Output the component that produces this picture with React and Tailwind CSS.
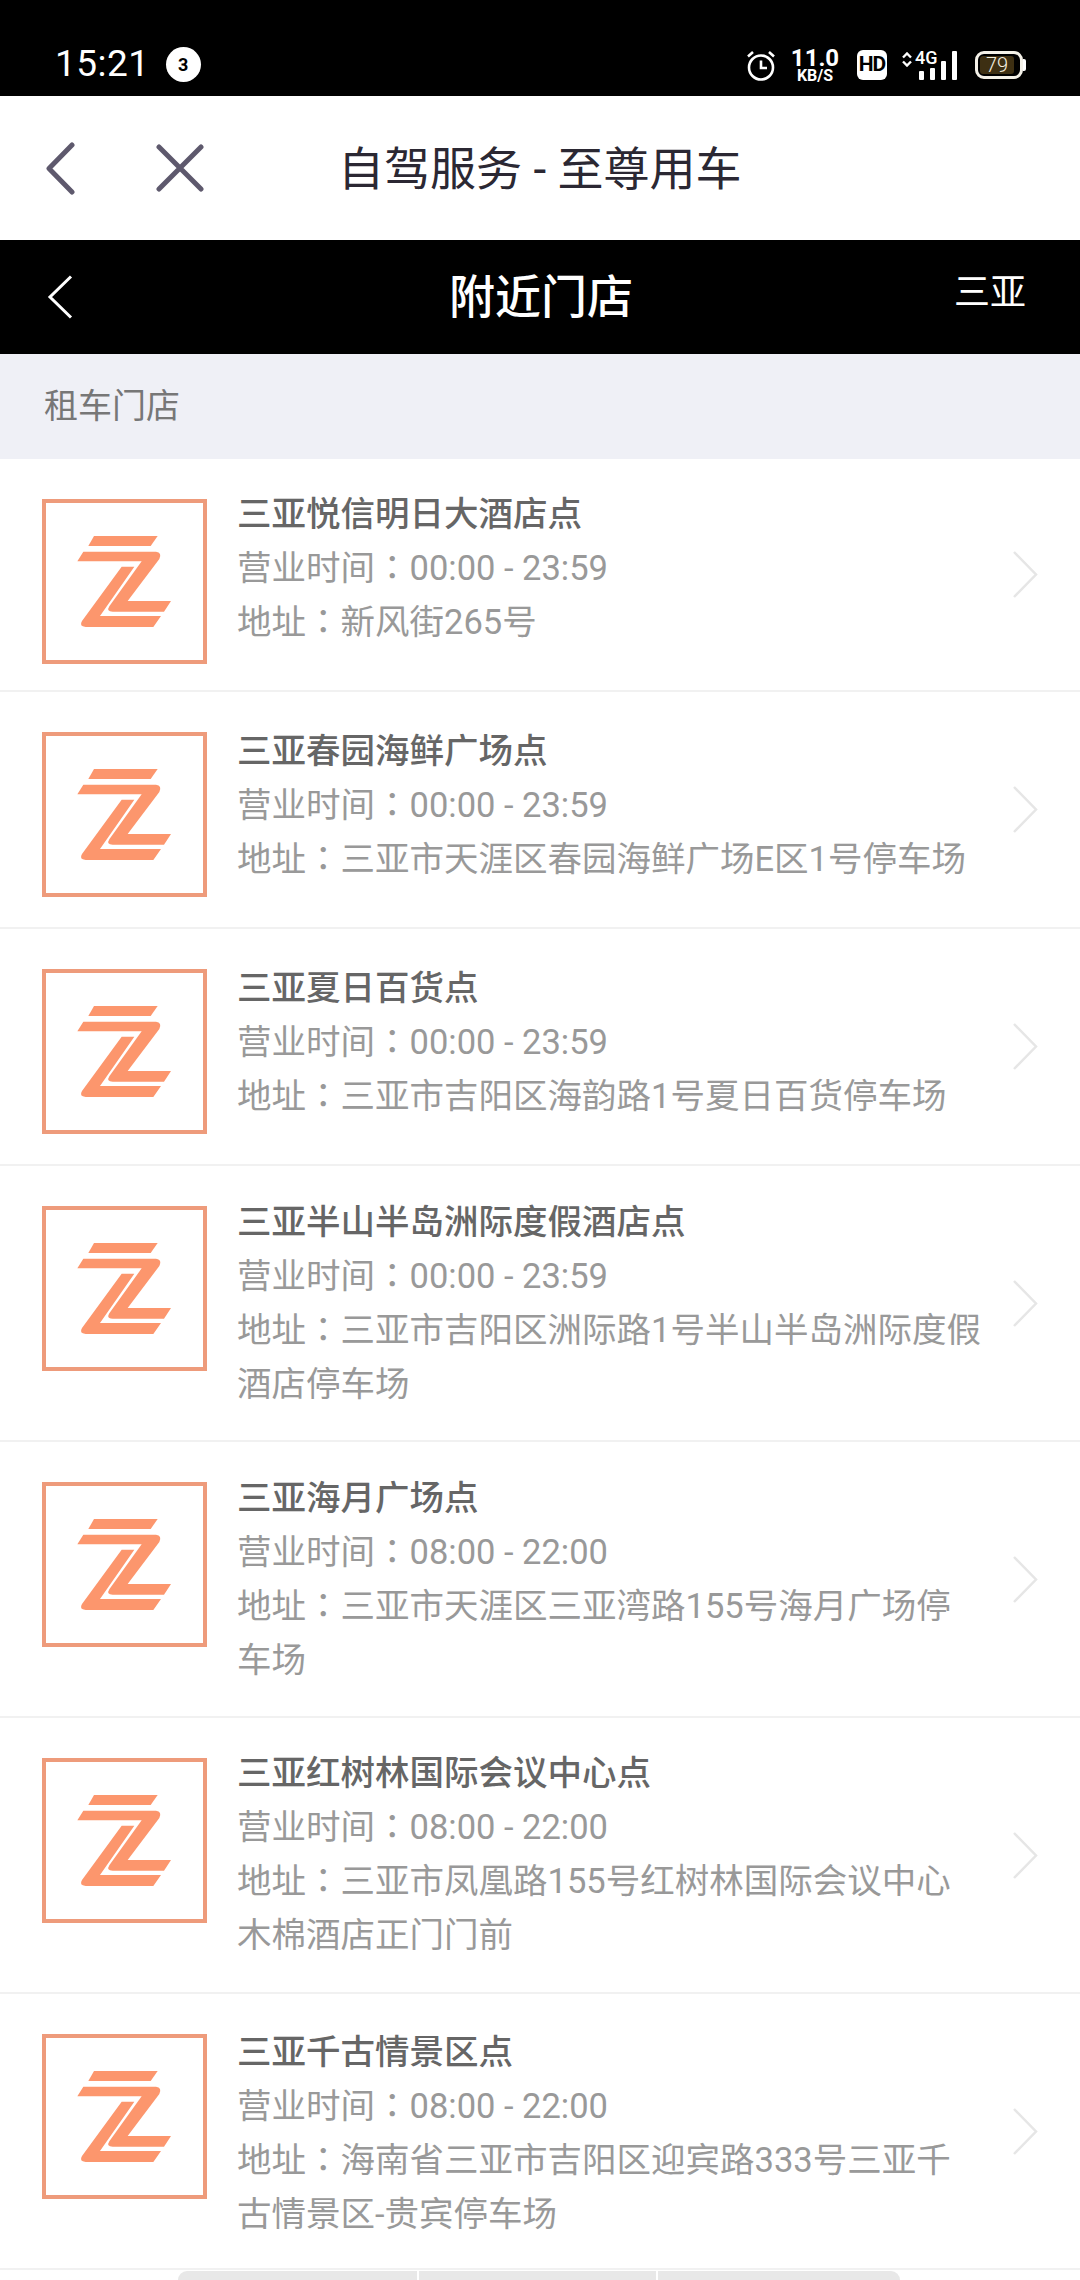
const stores = [
  { name: '三亚悦信明日大酒店点', hours: '00:00 - 23:59', address: '新风街265号', row: 'h-[233px]', text: 'mt-[28px]' },
  { name: '三亚春园海鲜广场点', hours: '00:00 - 23:59', address: '三亚市天涯区春园海鲜广场E区1号停车场', row: 'h-[237px]', text: 'mt-[32px]' },
  { name: '三亚夏日百货点', hours: '00:00 - 23:59', address: '三亚市吉阳区海韵路1号夏日百货停车场', row: 'h-[237px]', text: 'mt-[32px]' },
  { name: '三亚半山半岛洲际度假酒店点', hours: '00:00 - 23:59', address: '三亚市吉阳区洲际路1号半山半岛洲际度假酒店停车场', row: 'h-[276px]', text: 'mt-[29px]' },
  { name: '三亚海月广场点', hours: '08:00 - 22:00', address: '三亚市天涯区三亚湾路155号海月广场停车场', row: 'h-[276px]', text: 'mt-[29px]' },
  { name: '三亚红树林国际会议中心点', hours: '08:00 - 22:00', address: '三亚市凤凰路155号红树林国际会议中心木棉酒店正门门前', row: 'h-[276px]', text: 'mt-[28px]' },
  { name: '三亚千古情景区点', hours: '08:00 - 22:00', address: '海南省三亚市吉阳区迎宾路333号三亚千古情景区-贵宾停车场', row: 'h-[276px]', text: 'mt-[31px]' },
]

function Colon() {
  return <span className="font-['Roboto','Noto_Sans_CJK_TC',sans-serif]">：</span>
}

function StoreLogo() {
  return (
    <div className="w-[165px] h-[165px] mt-[40px] shrink-0 border-[4px] border-[#ee9b7b] bg-white">
      <svg viewBox="78 66 471 471" className="w-full h-full" fill="#fc966d">
        <path d="M222 165H413L392 195H205Z" />
        <path d="M190 212H408Q427 214 418 234L323 360H453L432 392H278Q258 392 268 376L365 241H172Z" />
        <path d="M305 257H343L240 405H423L400 438H197Q176 436 186 420Z" />
      </svg>
    </div>
  )
}

function StoreRow({ store }) {
  return (
    <div className={`flex border-b-2 border-[#f1f1f1] pl-[42px] ${store.row}`}>
      <StoreLogo />
      <div className={`w-[745px] ml-[30px] shrink-0 text-[34.5px] leading-[54px] text-[#999999] ${store.text}`}>
        <div className="font-medium text-[#666666]">{store.name}</div>
        <div>营业时间<Colon />{store.hours}</div>
        <div>地址<Colon />{store.address}</div>
      </div>
      <svg viewBox="0 0 25 47" className="w-[25px] h-[47px] self-center shrink-0 ml-[31px]" fill="none" stroke="#e6e6e6" strokeWidth="2.5">
        <path d="M1 1L23 23.5L1 46" />
      </svg>
    </div>
  )
}

function StatusBar() {
  return (
    <div className="h-[96px] bg-black text-white flex items-end pb-[12px] pl-[55px] pr-[54px] font-['Roboto']">
      <span className="text-[37px] leading-[40px] tracking-[0.5px]">15:21</span>
      <span className="ml-[16px] mb-[2px] w-[35px] h-[35px] rounded-full bg-white text-black flex items-center justify-center text-[18px] font-bold">3</span>
      <div className="ml-auto flex items-center h-[36px] mb-[1px]">
        <svg viewBox="0 0 28 31" className="w-[28px] h-[31px]" fill="none" stroke="white" strokeWidth="2.6">
          <circle cx="14" cy="17.5" r="12" />
          <path d="M14 10.5V18H20M1 6.5L6 2M27 6.5L22 2" />
        </svg>
        <div className="ml-[16px] w-[48px] flex flex-col items-center font-bold">
          <span className="text-[24px] leading-[20px]">11.0</span>
          <span className="text-[16px] leading-[15px]">KB/S</span>
        </div>
        <span className="ml-[18px] w-[30px] h-[30px] rounded-[6px] bg-white text-black flex items-center justify-center text-[21px] font-bold tracking-[-1px]">HD</span>
        <svg viewBox="0 0 10 15" className="ml-[15px] mb-[11px] w-[10px] h-[15px]" fill="none" stroke="white" strokeWidth="2.4">
          <path d="M1 5.5L5 1.5L9 5.5M1 9.5L5 13.5L9 9.5" />
        </svg>
        <div className="relative w-[52px] h-[30px] ml-[2px]">
          <span className="absolute left-[1px] top-[-1px] text-[18px] leading-[18px] font-medium">4G</span>
          <div className="absolute left-[5px] bottom-0 flex items-end gap-[6px]">
            <span className="w-[5px] h-[9px] bg-white rounded-[1px]" />
            <span className="w-[5px] h-[12px] bg-white rounded-[1px]" />
            <span className="w-[5px] h-[19px] bg-white rounded-[1px]" />
            <span className="w-[5px] h-[29px] bg-white rounded-[1px]" />
          </div>
        </div>
        <div className="ml-[9px] flex items-center">
          <div className="w-[48px] h-[28px] rounded-[9px] border-[3px] border-[#f4f1e8] p-[2px] flex">
            <div className="w-[34px] h-full rounded-[3px] bg-[#3d2f12] flex items-center justify-center text-[20px] font-light leading-none text-[#f5f0e0]">79</div>
          </div>
          <span className="w-[3px] h-[12px] bg-white rounded-r-[2px]" />
        </div>
      </div>
    </div>
  )
}

export default function App() {
  return (
    <div className="w-[1080px] h-[2280px] overflow-hidden bg-white font-['Roboto','Noto_Sans_CJK_SC',sans-serif]">
      <StatusBar />

      <div className="h-[144px] flex items-center relative">
        <svg viewBox="0 0 30 53" className="ml-[45px] w-[30px] h-[53px]" fill="none" stroke="#5e596d" strokeWidth="5" strokeLinecap="round" strokeLinejoin="round">
          <path d="M27 3L4 26.5L27 50" />
        </svg>
        <svg viewBox="0 0 48 48" className="ml-[81px] w-[48px] h-[48px]" fill="none" stroke="#5e596d" strokeWidth="5" strokeLinecap="round">
          <path d="M3 3L45 45M45 3L3 45" />
        </svg>
        <span className="ml-[134px] mt-[3px] text-[46px] text-[#2b2833] whitespace-nowrap">自驾服务 - 至尊用车</span>
      </div>

      <div className="h-[114px] bg-black text-white flex items-center justify-between pl-[47px] pr-[54px] relative">
        <svg viewBox="0 0 26 44" className="w-[26px] h-[44px]" fill="none" stroke="white" strokeWidth="3">
          <path d="M24 1.5L3 22L24 42.5" />
        </svg>
        <span className="absolute left-[449px] text-[46px] font-medium leading-none">附近门店</span>
        <span className="text-[36px] leading-none mb-[8px]">三亚</span>
      </div>

      <div className="h-[105px] bg-[#eff0f6] flex items-center pl-[44px] text-[34px] text-[#777777]">租车门店</div>

      {stores.map((store) => (
        <StoreRow key={store.name} store={store} />
      ))}

      <div className="mt-[1px] ml-[178px] w-[722px] h-[9px] flex gap-[2px] overflow-hidden rounded-t-[9px]">
        <div className="flex-[239] bg-[#e8e8e8]" />
        <div className="flex-[237] bg-[#e8e8e8]" />
        <div className="flex-[242] bg-[#e8e8e8]" />
      </div>
    </div>
  )
}
